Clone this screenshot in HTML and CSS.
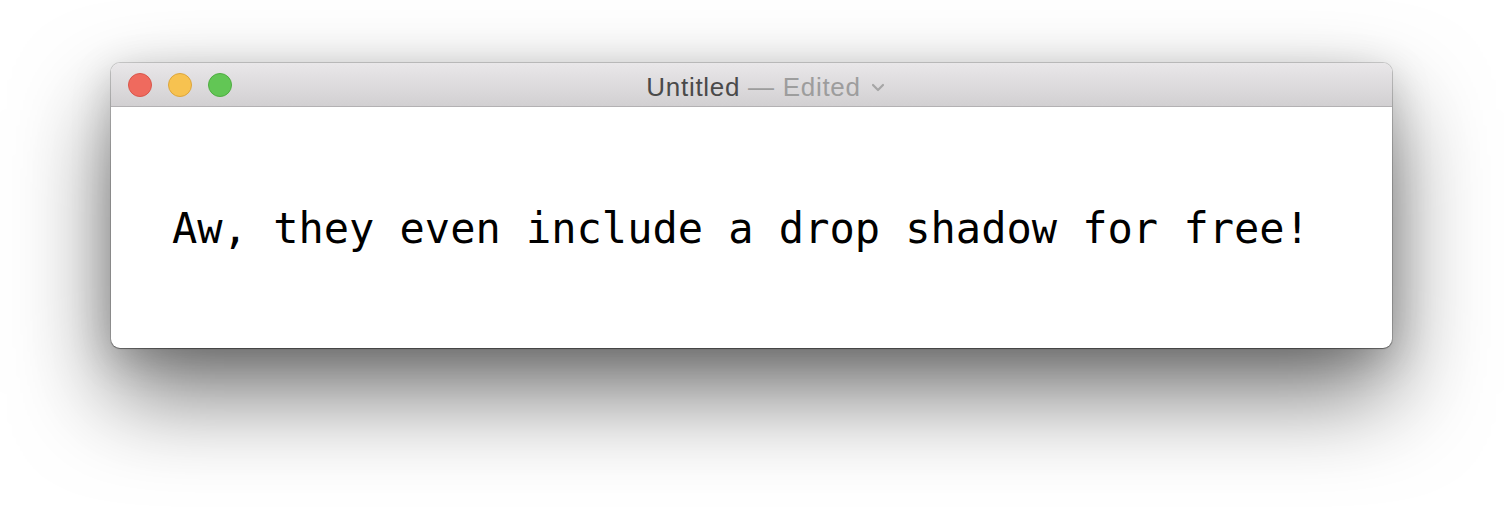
FILE: index.html
```html
<!DOCTYPE html>
<html>
<head>
<meta charset="utf-8">
<link rel="stylesheet" href="styles.css">
</head>
<body>
<div class="window">
  <div class="titlebar">
    <div class="lights">
      <span class="light red"></span>
      <span class="light yellow"></span>
      <span class="light green"></span>
    </div>
    <div class="title">
      <span class="name">Untitled</span>
      <span class="status">— Edited</span>
      <svg class="chev" width="14" height="9" viewBox="0 0 14 9"><path d="M2 2 L7 7 L12 2" fill="none" stroke="#a6a6a6" stroke-width="2.2" stroke-linecap="round" stroke-linejoin="round"/></svg>
    </div>
  </div>
  <div class="content">
    <p class="text">Aw, they even include a drop shadow for free!</p>
  </div>
</div>
</body>
</html>
```

FILE: styles.css
```css
html, body {
  margin: 0;
  background: #ffffff;
}
body {
  padding: 63px 112px 0 111px;
  height: 508px;
  box-sizing: border-box;
  overflow: hidden;
}
.window {
  width: 1281px;
  height: 285px;
  border-radius: 9px;
  background: #ffffff;
  display: flex;
  flex-direction: column;
  box-shadow: 0 0 0 1px rgba(0,0,0,0.16), 0 1px 1px rgba(0,0,0,0.35), 0 46px 95px rgba(0,0,0,0.55), 0 10px 40px rgba(0,0,0,0.18);
  overflow: hidden;
}
.titlebar {
  height: 43px;
  flex: 0 0 43px;
  background: linear-gradient(#e9e7e9, #d2d0d2);
  border-bottom: 1px solid #b3b1b3;
  position: relative;
  display: flex;
  align-items: center;
  justify-content: center;
}
.lights {
  position: absolute;
  left: 17px;
  top: 10px;
  display: flex;
  gap: 16px;
}
.light {
  width: 22px;
  height: 22px;
  border-radius: 50%;
  border: 1px solid;
}
.red { background: #ef6a5e; border-color: #d9564b; }
.yellow { background: #f7c250; border-color: #dda63c; }
.green { background: #62c655; border-color: #4fad41; }
.title {
  font-family: "Liberation Sans", Arial, sans-serif;
  font-size: 26px;
  letter-spacing: 0.7px;
  display: flex;
  align-items: center;
  gap: 8px;
  margin-left: 28px;
  margin-top: 5px;
}
.name { color: #4a4a4a; }
.status { color: #9d9d9d; }
.chev { margin-left: 2px; margin-top: 1px; }
.content {
  flex: 1;
  display: flex;
  align-items: center;
  padding-left: 61px;
}
.text {
  margin: 0;
  font-family: "DejaVu Sans Mono", monospace;
  font-size: 42px;
  color: #000000;
  white-space: pre;
  margin-top: 2px;
}
```
